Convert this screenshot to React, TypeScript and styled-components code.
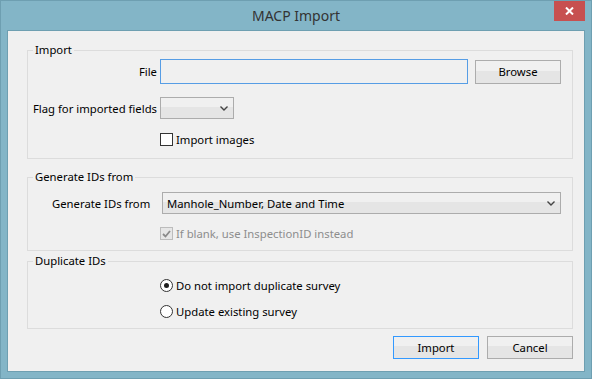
import React from 'react'
import styled, { createGlobalStyle } from 'styled-components'

const GlobalStyle = createGlobalStyle`
  html, body {
    margin: 0;
    padding: 0;
    background: #ffffff;
  }
  body {
    font-family: 'Noto Sans', 'Liberation Sans', sans-serif;
    font-size: 11.3px;
    color: #000000;
  }
`

const Window = styled.div`
  width: 592px;
  height: 379px;
  box-sizing: border-box;
  display: flex;
  flex-direction: column;
  padding: 0 6px 6px;
  background: #83b5c7;
  border: 1px solid #6e9fb1;
`

const TitleBar = styled.div`
  height: 29px;
  display: grid;
  grid-template-columns: 1fr auto 1fr;
  align-items: start;
`

const Title = styled.div`
  grid-column: 2;
  line-height: 29px;
  font-size: 14px;
  color: #333333;
`

const CloseButton = styled.div`
  grid-column: 3;
  justify-self: end;
  width: 31px;
  height: 20px;
  display: flex;
  align-items: center;
  justify-content: center;
  background: #c75050;
`

const Client = styled.div`
  flex: 1;
  display: flex;
  flex-direction: column;
  padding: 0 11px 0 19px;
  background: #f0f0f0;
  border: 1px solid #6e9fb1;
`

const Group = styled.fieldset<{ $top: number; $bottom: number }>`
  margin: ${p => p.$top}px 0 0;
  padding: 0 0 ${p => p.$bottom}px;
  min-width: 0;
  border: 1px solid #dcdcdc;
`

const Caption = styled.legend`
  margin-left: 5px;
  padding: 0 2px;
  line-height: 16px;
  font-size: 11.3px;
`

const Row = styled.div<{ $top: number; $height: number }>`
  display: flex;
  align-items: center;
  margin-top: ${p => p.$top}px;
  height: ${p => p.$height}px;
`

const FieldLabel = styled.label`
  width: 129px;
  margin-right: 3px;
  text-align: right;
  white-space: nowrap;
`

const IndentLabel = styled.label`
  width: 110px;
  padding-left: 24px;
  white-space: nowrap;
`

const TextBox = styled.div`
  width: 308px;
  height: 25px;
  box-sizing: border-box;
  background: #f0f0f0;
  border: 1px solid #569de5;
`

const Button = styled.div<{ $default?: boolean; $height?: number }>`
  width: 86px;
  height: ${p => p.$height ?? 23}px;
  box-sizing: border-box;
  display: flex;
  align-items: center;
  justify-content: center;
  background: linear-gradient(#f0f0f0 0%, #f0f0f0 45%, #e5e5e5 45%, #e5e5e5 100%);
  border: 1px solid ${p => (p.$default ? '#3399ff' : '#acacac')};
`

const Combo = styled.div<{ $width: number }>`
  width: ${p => p.$width}px;
  height: 22px;
  box-sizing: border-box;
  display: flex;
  align-items: center;
  padding: 0 5px 0 4px;
  background: linear-gradient(#f0f0f0 0%, #f0f0f0 45%, #e5e5e5 45%, #e5e5e5 100%);
  border: 1px solid #acacac;
`

const ComboText = styled.span`
  flex: 1;
  white-space: nowrap;
`

const Option = styled.div<{ $disabled?: boolean }>`
  display: flex;
  align-items: center;
  gap: 3px;
  margin-left: 132px;
  white-space: nowrap;
  color: ${p => (p.$disabled ? '#8d8d8d' : '#000000')};
`

const CheckBox = styled.span<{ $disabled?: boolean }>`
  width: 13px;
  height: 13px;
  box-sizing: border-box;
  display: flex;
  align-items: center;
  justify-content: center;
  background: ${p => (p.$disabled ? '#e6e6e6' : '#ffffff')};
  border: 1px solid ${p => (p.$disabled ? '#bcbcbc' : '#333333')};
`

const Radio = styled.span<{ $checked?: boolean }>`
  width: 13px;
  height: 13px;
  box-sizing: border-box;
  display: flex;
  align-items: center;
  justify-content: center;
  border-radius: 50%;
  background: #ffffff;
  border: 1px solid #333333;
  &::after {
    content: '';
    width: 5px;
    height: 5px;
    border-radius: 50%;
    background: ${p => (p.$checked ? '#1e1e1e' : 'transparent')};
  }
`

const ButtonRow = styled.div`
  display: flex;
  justify-content: flex-end;
  gap: 8px;
  margin-top: 7px;
`

const Chevron = () => (
  <svg width="8" height="5" viewBox="0 0 8 5">
    <polyline points="0.5,0.5 4,4 7.5,0.5" fill="none" stroke="#444" strokeWidth="1.4" />
  </svg>
)

const Check = () => (
  <svg width="9" height="8" viewBox="0 0 9 8">
    <polyline points="1,4 3.5,6.5 8,1" fill="none" stroke="#8a8a8a" strokeWidth="1.8" />
  </svg>
)

const App = () => {
  return (
    <>
      <GlobalStyle />
      <Window>
        <TitleBar>
          <Title>MACP Import</Title>
          <CloseButton>
            <svg width="9" height="8" viewBox="0 0 9 8">
              <path d="M1 0.5 L8 7.5 M8 0.5 L1 7.5" stroke="#fff" strokeWidth="2" />
            </svg>
          </CloseButton>
        </TitleBar>
        <Client>
          <Group $top={11} $bottom={10}>
            <Caption>Import</Caption>
            <Row $top={0} $height={27}>
              <FieldLabel>File</FieldLabel>
              <TextBox />
              <Button $height={24} style={{ marginLeft: 7 }}>Browse</Button>
            </Row>
            <Row $top={11} $height={24}>
              <FieldLabel>Flag for imported fields</FieldLabel>
              <Combo $width={74}>
                <ComboText />
                <Chevron />
              </Combo>
            </Row>
            <Row $top={11} $height={17}>
              <Option>
                <CheckBox />
                Import images
              </Option>
            </Row>
          </Group>

          <Group $top={10} $bottom={8}>
            <Caption>Generate IDs from</Caption>
            <Row $top={6} $height={24}>
              <IndentLabel>Generate IDs from</IndentLabel>
              <Combo $width={399}>
                <ComboText>Manhole_Number, Date and Time</ComboText>
                <Chevron />
              </Combo>
            </Row>
            <Row $top={10} $height={17}>
              <Option $disabled>
                <CheckBox $disabled>
                  <Check />
                </CheckBox>
                If blank, use InspectionID instead
              </Option>
            </Row>
          </Group>

          <Group $top={2} $bottom={8}>
            <Caption>Duplicate IDs</Caption>
            <Row $top={8} $height={17}>
              <Option>
                <Radio $checked />
                Do not import duplicate survey
              </Option>
            </Row>
            <Row $top={9} $height={17}>
              <Option>
                <Radio />
                Update existing survey
              </Option>
            </Row>
          </Group>

          <ButtonRow>
            <Button $default>Import</Button>
            <Button>Cancel</Button>
          </ButtonRow>
        </Client>
      </Window>
    </>
  )
}

export default App
